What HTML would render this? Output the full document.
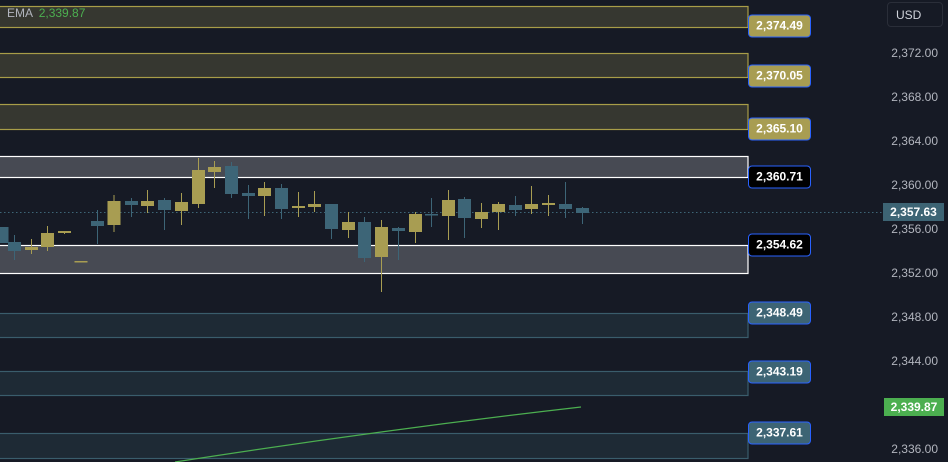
<!DOCTYPE html>
<html><head><meta charset="utf-8"><style>
html,body{margin:0;padding:0;background:#161a25;width:948px;height:462px;overflow:hidden;font-family:"Liberation Sans",sans-serif}
.ax{position:absolute;right:10px;font-size:12px;color:#b2b5be;transform:translateY(-50%)}
.lb{position:absolute;left:748px;width:61px;height:21px;border:1.5px solid #2962ff;border-radius:4px;color:#fff;font-size:12px;font-weight:bold;line-height:21px;text-align:center;transform:translateY(-50%)}
</style></head><body>
<svg width="948" height="462" style="position:absolute;left:0;top:0">
<g stroke-width="1.2">
<rect x="-2" y="6.5" width="750" height="21" fill="#363730" stroke="#a89d48"/>
<rect x="-2" y="53.5" width="750" height="24" fill="#363730" stroke="#a89d48"/>
<rect x="-2" y="104.5" width="750" height="25" fill="#363730" stroke="#a89d48"/>
<rect x="-2" y="156.5" width="750" height="21" fill="#474a53" stroke="#fff"/>
<rect x="-2" y="245.5" width="750" height="28" fill="#474a53" stroke="#fff"/>
<rect x="-2" y="313.5" width="750" height="24" fill="#1e2a35" stroke="#3a5d6c"/>
<rect x="-2" y="371.5" width="750" height="24" fill="#1e2a35" stroke="#3a5d6c"/>
<rect x="-2" y="433.5" width="750" height="25" fill="#1e2a35" stroke="#3a5d6c"/>
</g>
<line x1="0" y1="212.5" x2="885" y2="212.5" stroke="#3d6577" stroke-dasharray="1.5 2.5"/>
<path d="M175 462 Q380 430 581 407" fill="none" stroke="#4caf50" stroke-width="1.2"/>
<g id="c"></g>
</svg>
<div style="position:absolute;left:7px;top:6px;font-size:12px;color:#b2b5be">EMA <span style="color:#4caf50;margin-left:3px">2,339.87</span></div>
<div class="lb" style="top:26px;background:#a89d52">2,374.49</div>
<div class="lb" style="top:76px;background:#a89d52">2,370.05</div>
<div class="lb" style="top:129px;background:#a89d52">2,365.10</div>
<div class="lb" style="top:177px;background:#000">2,360.71</div>
<div class="lb" style="top:245px;background:#000">2,354.62</div>
<div class="lb" style="top:313px;background:#3d6474">2,348.49</div>
<div class="lb" style="top:372px;background:#3d6474">2,343.19</div>
<div class="lb" style="top:433px;background:#3d6474">2,337.61</div>
<div style="position:absolute;left:887px;top:2px;width:56px;height:25px;border:1px solid #2a2e39;border-radius:4px;color:#d1d4dc;font-size:12px;line-height:25px;box-sizing:border-box;padding-left:8px">USD</div>
<div class="ax" style="top:53px">2,372.00</div>
<div class="ax" style="top:97px">2,368.00</div>
<div class="ax" style="top:141px">2,364.00</div>
<div class="ax" style="top:185px">2,360.00</div>
<div class="ax" style="top:229px">2,356.00</div>
<div class="ax" style="top:273px">2,352.00</div>
<div class="ax" style="top:317px">2,348.00</div>
<div class="ax" style="top:361px">2,344.00</div>
<div class="ax" style="top:449px">2,336.00</div>
<div style="position:absolute;left:883px;top:203px;width:61px;height:18px;background:#3d6474;color:#fff;font-size:12px;font-weight:bold;line-height:18px;text-align:center">2,357.63</div>
<div style="position:absolute;left:884px;top:398px;width:60px;height:18px;background:#4caf50;color:#fff;font-size:12px;font-weight:bold;line-height:18px;text-align:center">2,339.87</div>
<script>
var d=[[2,'t',227,243,227,243],[14.5,'t',242,251,235,260],[31.5,'y',247,250,239,254],[47.5,'y',233,247,226,251],[64.5,'y',231,233,231,234],[81,'y',261,262,261,262],[97.5,'t',221,226,210,244],[114,'y',201,225,195,232],[131.5,'t',201,205,198,217],[147.5,'y',201,206,190,213],[164.5,'t',200,210,198,230],[181.5,'y',202,211,193,225],[198.5,'y',170,204,158,208],[214.5,'y',167,172,161,188],[231.5,'t',166,194,162,198],[248.5,'t',193,196,185,219],[264.5,'y',188,196,182,216],[281.5,'t',188,209,184,219],[298.5,'y',206,208,192,217],[314.5,'y',204,207,191,212],[331.5,'t',204,229,204,239],[348.5,'y',222,230,212,238],[364.5,'t',222,258,217,262],[381.5,'y',227,257,220,292],[398.5,'t',228,231,227,260],[415.5,'y',214,232,212,243],[431.5,'t',214,215,198,227],[448.5,'y',200,216,190,240],[464.5,'t',199,218,197,238],[481.5,'y',212,219,203,228],[498.5,'y',204,212,202,230],[515.5,'t',205,210,196,216],[531.5,'y',204,209,186,214],[548.5,'y',203,205,195,216],[565.5,'t',204,209,182,218],[582.5,'t',208,213,207,224]];
var s='';d.forEach(function(c){var col=c[1]=='y'?'#a89d52':'#3d6577';var bh=Math.max(1.5,c[3]-c[2]);
s+='<line x1="'+c[0]+'" x2="'+c[0]+'" y1="'+c[4]+'" y2="'+c[5]+'" stroke="'+col+'"/><rect x="'+(c[0]-6.5)+'" y="'+c[2]+'" width="13" height="'+bh+'" fill="'+col+'"/>';});
document.getElementById('c').innerHTML=s;
</script>
</body></html>
